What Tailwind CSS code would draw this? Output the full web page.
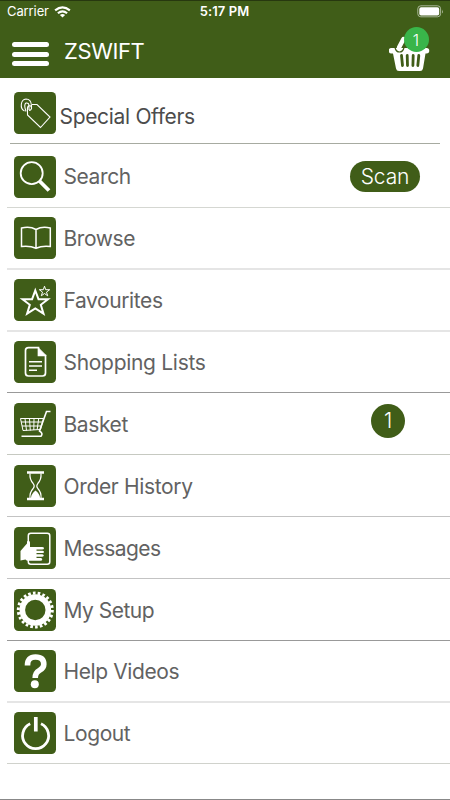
<!DOCTYPE html>
<html lang="en">
<head>
<meta charset="utf-8">
<title>ZSWIFT</title>
<script src="https://cdn.jsdelivr.net/npm/@tailwindcss/browser@4"></script>
</head>
<body class="w-[450px] h-[800px] overflow-hidden bg-white font-[Inter,sans-serif]">
<div class="flex flex-col w-[450px] h-[800px] border-b border-[#888]">
  <header class="h-[78px] shrink-0 bg-[#405d18] border-t border-[#27380f] text-white flex flex-col">
    <div class="h-[21px] shrink-0 grid grid-cols-3 items-center pl-[7px] pr-[6px] text-[13px] leading-none">
      <div class="flex items-center gap-[5px]"><span class="tracking-[-0.1px]">Carrier</span>
        <svg class="w-[17px] h-[12px]" viewBox="0 0 18 13" fill="none" stroke="#fff" stroke-width="2.300"><path d="M1 4.800Q9-2 17 4.800M4 7.900Q9 3.600 14 7.900"/><path d="M9 12.500L6.200 9.700Q9 7.600 11.800 9.700Z" fill="#fff" stroke="none"/></svg>
      </div>
      <div class="text-center font-semibold tracking-[0.1px] -ml-[2px]">5:17 PM</div>
      <svg class="justify-self-end w-[27px] h-[13px]" viewBox="0 0 27 13"><rect x=".8" y=".8" width="22.800" height="11" rx="3" fill="none" stroke="#a9b798"/><rect x="2.300" y="2.200" width="19.900" height="8.300" rx="1.800" fill="#fff"/><path d="M25 4.400q1.700 2 0 4z" fill="#a9b798"/></svg>
    </div>
    <div class="flex items-start pl-[12px] pr-[20px] flex-1">
      <div class="flex flex-col gap-[4.500px] pt-[20px] w-[37px]"><i class="h-[5px] rounded-full bg-white"></i><i class="h-[5px] rounded-full bg-white"></i><i class="h-[5px] rounded-full bg-white"></i></div>
      <div class="pl-[15px] pt-[16px] text-[22px] leading-[26px] font-normal tracking-[-0.4px]">ZSWIFT</div>
      <div class="relative ml-auto mt-[5px] w-[41px] h-[45px]">
        <svg class="w-full h-full" viewBox="0 0 41 45" fill="#fff"><path d="M14.500 12L10 20.500" stroke="#fff" stroke-width="4.500" stroke-linecap="round"/><path d="M2.500 21H37.500a2.600 2.600 0 0 1 0 5.500H36.500l-2.500 15q-.5 2.500-3 2.500H10q-2.500 0-3-2.500L4 26.500H2.500A2.600 2.600 0 0 1 2.500 21Z"/><path d="M6 20.500q1 4.500 4.500 4.500t4.500-4.500" fill="none" stroke="#405d18" stroke-width="1.200"/><path d="M12.500 28.500l1 10M18.200 28.500l.3 10M24.200 28.500l-.3 10M29.800 28.500l-1 10" stroke="#405d18" stroke-width="2.800" stroke-linecap="round"/></svg>
        <span class="absolute left-[14.500px] top-0 size-[25px] rounded-full bg-[#39b54a] flex items-center justify-center text-[16px] leading-none font-light">1</span>
      </div>
    </div>
  </header>

  <main class="flex flex-col text-[21px] leading-[28px] font-normal tracking-[-0.4px] text-[#626262]">
    <div class="mx-[10px] h-[66px] border-b border-[#a7aba1] pl-[4px] pt-[14px] flex items-start gap-[3.500px]">
      <svg class="size-[42px] shrink-0" viewBox="0 0 42 42" fill="none" stroke="#fff" stroke-width="1.100"><rect width="42" height="42" rx="4.500" fill="#405d18" stroke="none"/><path d="M13.500 18.500v4.500L26.500 35.500 36 25 23 12.500h-5"/><path d="M10.500 19C5.500 16.500 6.500 7.500 12 7q5 0 5.500 6.500v3q-.5 2-2.500 2M12 19.500q-2.500-7 0-8.500 3-.5 3 3v4M13.500 19q-.5-4.500 1.500-5.500 2.500 0 2.500 2.500"/></svg>
      <span class="pt-[10.500px] text-[#4c4c4c] tracking-[-0.32px]">Special Offers</span>
    </div>
    <div class="ml-[7px] h-[64px] border-b border-[#d5d7d2] pl-[7px] pr-[30px] pt-[12px] flex items-start gap-[7.500px]">
      <svg class="size-[42px] shrink-0" viewBox="0 0 42 42" fill="none" stroke="#fff"><rect width="42" height="42" rx="4.500" fill="#405d18" stroke="none"/><circle cx="17.700" cy="17.200" r="11" stroke-width="1.800"/><path d="M25.500 25l9.500 9.500" stroke-width="3.800"/></svg>
      <span class="pt-[7px]">Search</span>
      <span class="ml-auto mt-[5px] w-[70px] h-[31px] rounded-full bg-[#405d18] text-white font-light tracking-[-0.1px] flex items-center justify-center">Scan</span>
    </div>
    <div class="ml-[7px] h-[62px] border-b-2 border-[#e5e5e5] pl-[7px] pt-[9px] flex items-start gap-[7.500px]">
      <svg class="size-[42px] shrink-0" viewBox="0 0 42 42" fill="none" stroke="#fff" stroke-width="1.500"><rect width="42" height="42" rx="4.500" fill="#405d18" stroke="none"/><path d="M22 12.500Q28 9 36.300 11V29.500Q28 28.500 22 31.300 16 28.500 7.500 29.500V11Q16 9 22 12.500zV31"/></svg>
      <span class="pt-[8px]">Browse</span>
    </div>
    <div class="ml-[7px] h-[62px] border-b-2 border-[#e5e5e5] pl-[7px] pt-[9px] flex items-start gap-[7.500px]">
      <svg class="size-[42px] shrink-0" viewBox="0 0 42 42" fill="none" stroke="#fff"><rect width="42" height="42" rx="4.500" fill="#405d18" stroke="none"/><path d="M21.300 11.500l3.200 8.700 9.500.1-7.200 5.500 2.700 8.900-8.200-5.300-8.200 5.300 2.700-8.900-7.300-5.500 9.600-.1z" stroke-width="2"/><path d="M30.500 7.200l1.200 3.500h4l-3.200 2.400 1.200 3.700-3.200-2.300-3.200 2.300 1.200-3.700-3.200-2.400h4z" stroke-width="1"/></svg>
      <span class="pt-[8px]">Favourites</span>
    </div>
    <div class="ml-[7px] h-[61px] border-b border-[#999] pl-[7px] pt-[9px] flex items-start gap-[7.500px]">
      <svg class="size-[42px] shrink-0" viewBox="0 0 42 42" fill="none" stroke="#fff"><rect width="42" height="42" rx="4.500" fill="#405d18" stroke="none"/><path d="M24.500 6.700H14.500Q11.500 6.700 11.500 9.500V32Q11.500 35 14.500 35H28.500Q31.500 35 31.500 32V14.500H24.500z" stroke-width="1.700"/><path d="M24.500 7L32 14.500H24.500z" fill="#fff"/><path d="M15 20.700H28M15 25H28M15 29.300H23" stroke-width="1.500"/></svg>
      <span class="pt-[8px] tracking-[-0.3px]">Shopping Lists</span>
    </div>
    <div class="ml-[7px] h-[62px] border-b border-[#c6c9c1] pl-[7px] pr-[45px] pt-[10px] flex items-start gap-[7.500px]">
      <svg class="size-[42px] shrink-0" viewBox="0 0 42 42" fill="none" stroke="#fff"><rect width="42" height="42" rx="4.500" fill="#405d18" stroke="none"/><path d="M36.500 8.500H32.500L25.500 28q4 2.500 1.500 5.300H7.500" stroke-width="1.600"/><path d="M6.500 15.500H29.500L26.500 26.500 9 27.500zM7 19H28.500M8 23H27.500M11 15.500l1.500 12M15.500 15.500l.8 12M20 15.500l-.2 11.500M24.700 15.500l-1.500 11" stroke-width="1"/></svg>
      <span class="pt-[8px]">Basket</span>
      <span class="ml-auto mt-[1px] size-[34px] rounded-full bg-[#405d18] text-white font-light flex items-center justify-center">1</span>
    </div>
    <div class="ml-[7px] h-[62px] border-b border-[#c3c3c3] pl-[7px] pt-[10px] flex items-start gap-[7.500px]">
      <svg class="size-[42px] shrink-0" viewBox="0 0 42 42" fill="none" stroke="#fff"><rect width="42" height="42" rx="4.500" fill="#405d18" stroke="none"/><path d="M13 7.500H30M13 34H30" stroke-width="2.600"/><path d="M16 8.500q-.5 6 3.200 10 2 2.500 0 5-3.700 4-3.200 9.500M27 8.500q.5 6-3.200 10-2 2.500 0 5 3.700 4 3.200 9.500" stroke-width="1.200"/><path d="M17 33q0-4 4.500-7.500Q26 29 26 33z" fill="#fff" stroke="none"/></svg>
      <span class="pt-[8px] tracking-[-0.34px]">Order History</span>
    </div>
    <div class="ml-[7px] h-[62px] border-b border-[#c3c3c3] pl-[7px] pt-[9.500px] flex items-start gap-[7.500px]">
      <svg class="size-[42px] shrink-0" viewBox="0 0 42 42"><rect width="42" height="42" rx="4.500" fill="#405d18"/><rect x="14.300" y="6.200" width="21.500" height="31" rx="2.500" fill="none" stroke="#fff" stroke-width="1.500"/><path d="M6.500 24L13 16.500V14.500q2.500-2 3 1v4.500H28q2 0 2 1.200t-2 1.200H22.500v1.300H28.500q1.600.2 1.600 1.200t-1.600 1.200H22.500v1.200H28.300q1.500.2 1.500 1.300t-1.500 1.200H22.500v1.100H26.800q1.500.2 1.500 1.300 0 1.500-2 1.500H14q-1.500 0-2.500-1.200L6.500 33.500z" fill="#fff"/></svg>
      <span class="pt-[8px] tracking-[-0.55px]">Messages</span>
    </div>
    <div class="ml-[7px] h-[62px] border-b border-[#999] pl-[7px] pt-[9.500px] flex items-start gap-[7.500px]">
      <svg class="size-[42px] shrink-0" viewBox="0 0 42 42" fill="none" stroke="#fff"><rect width="42" height="42" rx="4.500" fill="#405d18" stroke="none"/><circle cx="21.300" cy="21" r="13" stroke-width="5.600"/><circle cx="21.300" cy="21" r="17" stroke-width="3" pathLength="88" stroke-dasharray="2.200 1.800"/></svg>
      <span class="pt-[8px] tracking-[-0.5px]">My Setup</span>
    </div>
    <div class="ml-[7px] h-[62px] border-b-2 border-[#e5e5e5] pl-[7px] pt-[9px] flex items-start gap-[7.500px]">
      <svg class="size-[42px] shrink-0" viewBox="0 0 42 42" fill="none" stroke="#fff"><rect width="42" height="42" rx="4.500" fill="#405d18" stroke="none"/><path d="M13.500 15.500q-.2-8.500 8-8.500 8.300 0 8.300 7.200 0 3.800-4.300 6.200-4.300 2.300-4.300 7.600" stroke-width="5.600"/><circle cx="20.800" cy="34.300" r="4" fill="#fff" stroke="none"/></svg>
      <span class="pt-[8px]">Help Videos</span>
    </div>
    <div class="ml-[7px] h-[61px] border-b border-[#d0d2cc] pl-[7px] pt-[9px] flex items-start gap-[7.500px]">
      <svg class="size-[42px] shrink-0" viewBox="0 0 42 42" fill="none" stroke="#fff"><rect width="42" height="42" rx="4.500" fill="#405d18" stroke="none"/><path d="M16.200 11.800A13 13 0 1 0 27 11.800" stroke-width="2.800"/><path d="M21.800 5V19.500" stroke-width="3.700"/></svg>
      <span class="pt-[8px]">Logout</span>
    </div>
  </main>
</div>
</body>
</html>
